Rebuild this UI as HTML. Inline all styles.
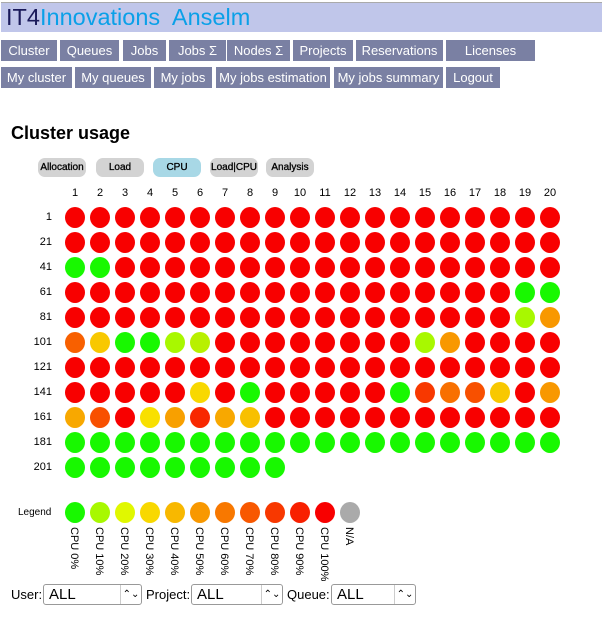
<!DOCTYPE html>
<html><head><meta charset="utf-8">
<style>
body{margin:0;width:602px;height:617px;background:#fff;font-family:"Liberation Sans",sans-serif;position:relative;overflow:hidden}
#hdr{position:absolute;left:1px;top:2px;width:601px;height:29px;background:#c0c6ea;border-top:1px solid #aaa}
#hdr span{position:absolute;left:5px;top:1px;font-size:23.5px;color:#0aa0e8;white-space:pre}
.b{position:absolute;height:21px;background:#7a80a3;color:#fff;font-size:13px;line-height:21px;text-align:center}
h1{position:absolute;left:11px;top:123px;margin:0;font-size:18px;font-weight:bold}
.t{position:absolute;top:158px;height:19px;width:48px;border-radius:7px;background:#d3d3d3;font-size:10px;line-height:19px;text-align:center;-webkit-text-stroke:0.3px #000}
.n{position:absolute;font-size:11px;width:24px;text-align:center}
.r{position:absolute;font-size:11px;width:30px;text-align:right;left:22px}
.c{position:absolute;width:20px;height:21px;border-radius:50%}
.lg{position:absolute;top:527px;font-size:11px;writing-mode:vertical-rl;white-space:nowrap}
.s{position:absolute;top:584px;height:21px;border:1px solid #999;border-radius:3px;background:#fff;font-size:15px;line-height:20px;padding-left:5px;box-sizing:border-box}
.s i{position:absolute;right:0;top:0;width:20px;height:19px;border-left:1px solid #ccc;font-style:normal;font-size:10px;text-align:center;line-height:19px}
.lab{position:absolute;top:587px;font-size:13px}
</style></head><body>
<div id="hdr"><span><b style="font-weight:normal;color:#1a1a5a">IT4</b>Innovations  Anselm</span></div>
<div class="b" style="left:1px;top:40px;width:56px">Cluster</div>
<div class="b" style="left:60px;top:40px;width:59px">Queues</div>
<div class="b" style="left:123px;top:40px;width:43px">Jobs</div>
<div class="b" style="left:169px;top:40px;width:57px">Jobs Σ</div>
<div class="b" style="left:227px;top:40px;width:63px">Nodes Σ</div>
<div class="b" style="left:293px;top:40px;width:60px">Projects</div>
<div class="b" style="left:356px;top:40px;width:87px">Reservations</div>
<div class="b" style="left:446px;top:40px;width:89px">Licenses</div>
<div class="b" style="left:1px;top:67px;width:71px">My cluster</div>
<div class="b" style="left:75px;top:67px;width:76px">My queues</div>
<div class="b" style="left:154px;top:67px;width:58px">My jobs</div>
<div class="b" style="left:216px;top:67px;width:114px">My jobs estimation</div>
<div class="b" style="left:334px;top:67px;width:109px">My jobs summary</div>
<div class="b" style="left:446px;top:67px;width:54px">Logout</div>
<h1>Cluster usage</h1>
<div class="t" style="left:38px">Allocation</div>
<div class="t" style="left:96px">Load</div>
<div class="t" style="left:153px;background:#a8d8e6">CPU</div>
<div class="t" style="left:210px">Load|CPU</div>
<div class="t" style="left:266px">Analysis</div>
<div id="g"></div>
<div style="position:absolute;left:18px;top:507px;font-size:10px">Legend</div>
<div class="lab" style="left:11px">User:</div>
<div class="s" style="left:43px;width:99px">ALL<i>⌃⌄</i></div>
<div class="lab" style="left:146px">Project:</div>
<div class="s" style="left:191px;width:92px">ALL<i>⌃⌄</i></div>
<div class="lab" style="left:287px">Queue:</div>
<div class="s" style="left:331px;width:85px">ALL<i>⌃⌄</i></div>
<script>
var R='#f80000',G='#18f800';
function row(o){var a=[];for(var i=0;i<20;i++)a.push(o[i+1]||R);return a}
var rows=[row({}),row({}),row({1:G,2:G}),row({19:G,20:G}),row({19:'#a8f800',20:'#f89800'}),
row({1:'#f86000',2:'#f8c800',3:G,4:G,5:'#a8f800',6:'#b8f000',15:'#a8f800',16:'#f89800'}),
row({}),
row({6:'#f8d800',8:G,14:G,15:'#f83800',16:'#f87000',17:'#f85000',18:'#f8c800',20:'#f89800'}),
row({1:'#f8a800',2:'#f85000',4:'#f8e000',5:'#f8a000',6:'#f82800',7:'#f8a800',8:'#f8c000'}),
Array(20).fill(G),Array(9).fill(G)];
var h='';
for(var c=1;c<=20;c++)h+='<div class="n" style="left:'+(63+25*(c-1))+'px;top:187px">'+c+'</div>';
var labs=[1,21,41,61,81,101,121,141,161,181,201];
rows.forEach(function(r,i){var y=207+25*i;
h+='<div class="r" style="top:'+(y+4)+'px">'+labs[i]+'</div>';
r.forEach(function(col,j){h+='<div class="c" style="left:'+(65+25*j)+'px;top:'+y+'px;background:'+col+'"></div>'})});
var lc=['#18f800','#a8f800','#e0f800','#f8d800','#f8b800','#f89800','#f87800','#f85800','#f83800','#f82000','#f80000','#aaaaaa'];
var lt=['CPU 0%','CPU 10%','CPU 20%','CPU 30%','CPU 40%','CPU 50%','CPU 60%','CPU 70%','CPU 80%','CPU 90%','CPU 100%','N/A'];
lc.forEach(function(col,j){h+='<div class="c" style="left:'+(65+25*j)+'px;top:502px;background:'+col+'"></div>';
h+='<div class="lg" style="left:'+(68+25*j)+'px">'+lt[j]+'</div>'});
document.getElementById('g').innerHTML=h;
</script>
</body></html>
